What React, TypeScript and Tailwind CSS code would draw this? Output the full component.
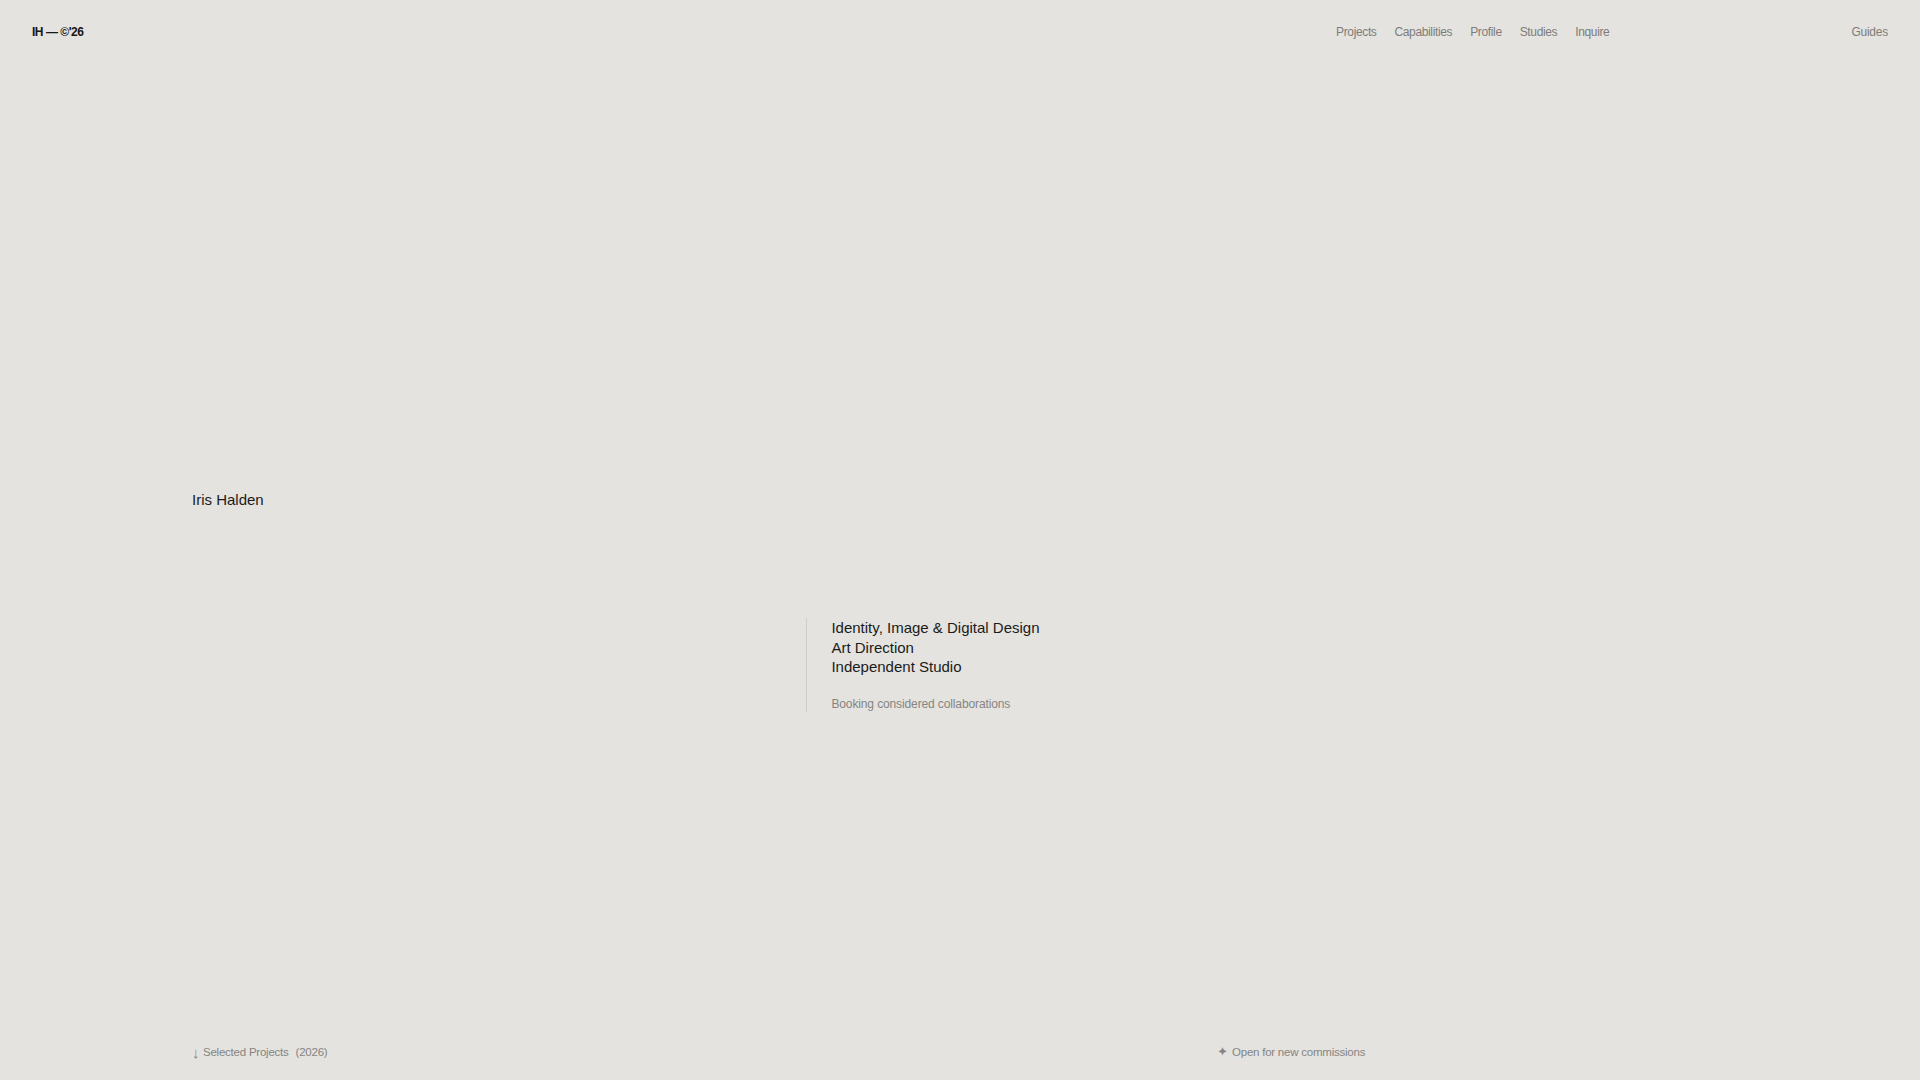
const navItems = ["Projects", "Capabilities", "Profile", "Studies", "Inquire"];

const services = [
  "Identity, Image & Digital Design",
  "Art Direction",
  "Independent Studio",
];

export default function App() {
  return (
    <div className="h-screen w-full bg-[#e4e3df] flex flex-col font-['Liberation_Sans',Arial,sans-serif] text-[#1b1b1b] overflow-hidden">
      <header className="h-16 px-8 flex items-center shrink-0">
        <a className="text-[12px] font-bold tracking-[-0.04em] text-[#161616]">IH — ©'26</a>
        <div className="flex-1" />
        <nav className="flex items-center gap-[18px] text-[12px] tracking-[-0.03em] text-[#7d7d7b]">
          {navItems.map((item) => (
            <a key={item}>{item}</a>
          ))}
        </nav>
        <a className="ml-[242px] text-[12px] tracking-[-0.02em] text-[#7d7d7b]">Guides</a>
      </header>

      <main className="flex-1 px-[192px]">
        <h1 className="pt-[426px] text-[15px] leading-[20px]">Iris Halden</h1>

        <div className="grid grid-cols-5 mt-[108px]">
          <div className="col-start-3 col-span-3 border-l border-[#cfcdc9] pl-[24px]">
            <ul className="text-[15px] leading-[1.3]">
              {services.map((s) => (
                <li key={s}>{s}</li>
              ))}
            </ul>
            <p className="mt-[19px] text-[12px] leading-4 tracking-[-0.01em] text-[#858583]">
              Booking considered collaborations
            </p>
          </div>
        </div>
      </main>

      <footer className="px-[192px] pb-[19px] grid grid-cols-3 items-center text-[11.5px] leading-4 tracking-[-0.02em] text-[#858583] shrink-0">
        <div className="flex items-center">
          <span className="text-[15px] leading-4 w-[11px] mt-[2px]">↓</span>
          <span>Selected Projects</span>
          <span className="ml-[7px]">(2026)</span>
        </div>
        <div />
        <div className="flex items-center">
          <span className="text-[13px] leading-4 ml-[1px] w-[15px]">✦</span>
          <span>Open for new commissions</span>
        </div>
      </footer>
    </div>
  );
}
